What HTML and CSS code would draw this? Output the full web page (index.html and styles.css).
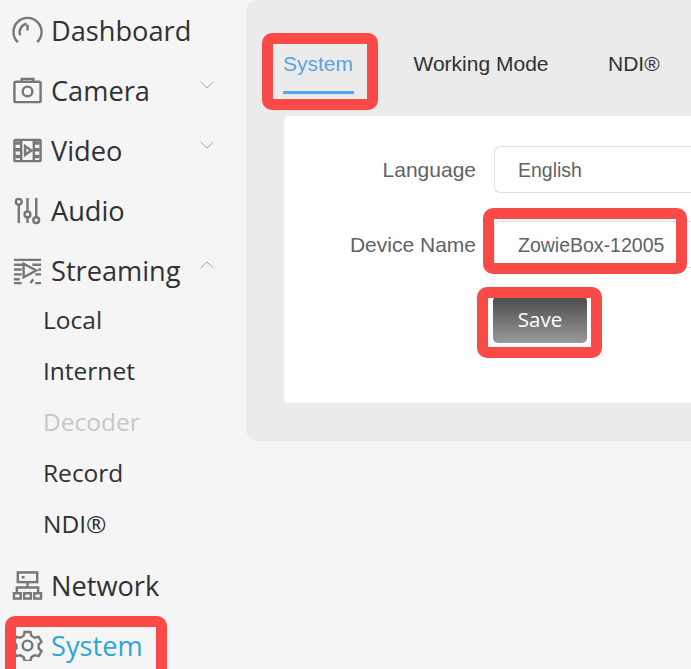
FILE: index.html
```html
<!DOCTYPE html>
<html lang="en">
<head>
<meta charset="utf-8">
<title>System</title>
<link rel="stylesheet" href="styles.css">
</head>
<body>
<div class="app">
  <nav class="sidebar">
    <div class="item">
      <svg class="icon" viewBox="0 0 32 32"><path d="M6 28A14.500 14.500 0 1 1 26 28"/><path d="M8.500 21A9 9 0 0 1 15 9"/><path d="M16 10v6"/></svg>
      <span>Dashboard</span>
    </div>
    <div class="item">
      <svg class="icon" viewBox="0 0 32 32"><rect x="2.500" y="7" width="27" height="21" rx="1.500"/><path d="M10 7V4h12v3"/><circle cx="16" cy="17" r="5"/></svg>
      <span>Camera</span>
      <svg class="chev" viewBox="0 0 14 8"><path d="M.5.8 7 7 13.5.8"/></svg>
    </div>
    <div class="item">
      <svg class="icon" viewBox="0 0 32 32"><rect x="2.500" y="5" width="27" height="22" rx="1"/><path class="thick" d="M6 5v22M26 5v22" stroke-dasharray="3.500 3.500" stroke-dashoffset="-1.500"/><path d="M9.500 5v22M22.500 5v22"/><path d="M13.500 11.500v9l6.500-4.500z"/></svg>
      <span>Video</span>
      <svg class="chev" viewBox="0 0 14 8"><path d="M.5.8 7 7 13.5.8"/></svg>
    </div>
    <div class="item">
      <svg class="icon" viewBox="0 0 32 32"><circle cx="7" cy="7" r="3"/><path d="M7 10v19"/><path d="M16 3v14M16 23v6"/><circle cx="16" cy="20" r="3"/><path d="M25 3v20"/><circle cx="25" cy="26" r="3"/></svg>
      <span>Audio</span>
    </div>
    <div class="item">
      <svg class="icon" viewBox="0 0 32 32"><path d="M2 5h28M2 10h12M21 10h9M2 15h8M27 15h3M2 20h8M24 20h6M2 25h6M2 29h8M22 25l-3 4M24 29h6"/><path d="M12 9v14l13-7z"/></svg>
      <span>Streaming</span>
      <svg class="chev" viewBox="0 0 14 8"><path d="M.5 7.200 7 1l6.500 6.200"/></svg>
    </div>
    <ul class="submenu">
      <li>Local</li>
      <li>Internet</li>
      <li class="disabled">Decoder</li>
      <li>Record</li>
      <li>NDI®</li>
    </ul>
    <div class="item">
      <svg class="icon" viewBox="0 0 32 32"><rect x="6" y="2.500" width="20" height="10"/><path d="M10 7.500h3M16 12v6M5 24v-6h22v6"/><rect x="2" y="24" width="7" height="5.500"/><rect x="12.500" y="24" width="7" height="5.500"/><rect x="23" y="24" width="7" height="5.500"/></svg>
      <span>Network</span>
    </div>
    <div class="item active">
      <svg class="icon" viewBox="0 0 32 32"><path d="M13 2h6l1 4 3.500 2 4-1 3 5.200-3 2.800v4l3 2.800-3 5.200-4-1-3.500 2-1 4h-6l-1-4-3.500-2-4 1-3-5.200 3-2.800v-4l-3-2.800 3-5.200 4 1 3.500-2z"/><circle cx="16" cy="16" r="5"/></svg>
      <span>System</span>
    </div>
  </nav>
  <main class="panel">
    <div class="tabs">
      <div class="tab current">System</div>
      <div class="tab">Working Mode</div>
      <div class="tab">NDI®</div>
    </div>
    <section class="card">
      <div class="row">
        <label class="label">Language</label>
        <div class="input">English</div>
      </div>
      <div class="row">
        <label class="label">Device Name</label>
        <div class="input">ZowieBox-12005</div>
      </div>
      <button class="save">Save</button>
    </section>
  </main>
</div>
<div class="mark mark-tab"></div>
<div class="mark mark-name"></div>
<div class="mark mark-save"></div>
<div class="mark mark-nav"></div>
</body>
</html>
```
FILE: styles.css
```css
* { box-sizing: border-box; }
html, body { margin: 0; height: 100%; overflow: hidden; background: #f5f5f5; }
body { position: relative; font-family: "Liberation Sans", Arial, sans-serif; }
.app { display: flex; align-items: flex-start; height: 669px; overflow: hidden; }

.sidebar { flex: 0 0 246px; font-family: "Open Sans", sans-serif; color: #303133; }
.item { display: flex; align-items: center; height: 60px; padding-left: 12px; font-size: 27.2px; position: relative; }
.item > span { margin-left: 8px; }
.icon { width: 31px; height: 31px; fill: none; stroke: #777; stroke-width: 2.5; flex: none; }
.icon .thick { stroke-width: 5; }
.chev { position: absolute; left: 200px; top: 21px; width: 14px; height: 8px; fill: none; stroke: #a6a6a6; stroke-width: 1; }
.active { color: #2ea6d8; }
.submenu { list-style: none; margin: -6px 0 6px; padding: 0; }
.submenu li { height: 51px; line-height: 51px; padding-left: 43px; font-size: 24.5px; }
.submenu .disabled { color: #c8c8c8; }

.panel { flex: 1; height: 441px; padding: 0 0 38px 38px; background: #ebebeb; border-radius: 12px 0 0 12px; display: flex; flex-direction: column; }
.tabs { display: flex; height: 94px; flex: none; gap: 59.500px; align-items: flex-end; box-shadow: 0 1px 0 #e4e7ed; margin-left: -1px; font-size: 21px; color: #303133; }
.tab { height: 47px; line-height: 34px; white-space: nowrap; }
.tab.current { color: #5ba3e0; border-bottom: 3px solid #5ba3e0; width: 71px; }
.card { margin-top: 22px; flex: 1; background: #fff; border-radius: 4px 0 0 4px; padding-top: 30px; }
.row { display: flex; align-items: center; margin-bottom: 28px; height: 47px; }
.label { flex: none; width: 210px; padding-right: 18px; text-align: right; font-size: 21px; color: #606266; white-space: nowrap; }
.input { flex: 1; height: 47px; line-height: 47px; padding-left: 23px; border: 1px solid #dcdfe6; border-radius: 6px 0 0 6px; border-right: 0; font-size: 19.5px; color: #606266; white-space: nowrap; }
.save { display: block; margin: 2px 0 0 209px; width: 94px; height: 47px; padding: 0 0 2px; border: 0; border-radius: 5px; background: linear-gradient(#4a4a4a, #999); color: #fff; font: 500 20.5px "Open Sans", sans-serif; }

.mark { position: absolute; border: 11px solid #f94a48; border-radius: 10px; }
.mark-tab { left: 262px; top: 33px; width: 116px; height: 77px; }
.mark-name { left: 483px; top: 208px; width: 204px; height: 66px; }
.mark-save { left: 477px; top: 287px; width: 125px; height: 71px; }
.mark-nav { left: 5px; top: 616px; width: 162px; height: 64px; }
```
